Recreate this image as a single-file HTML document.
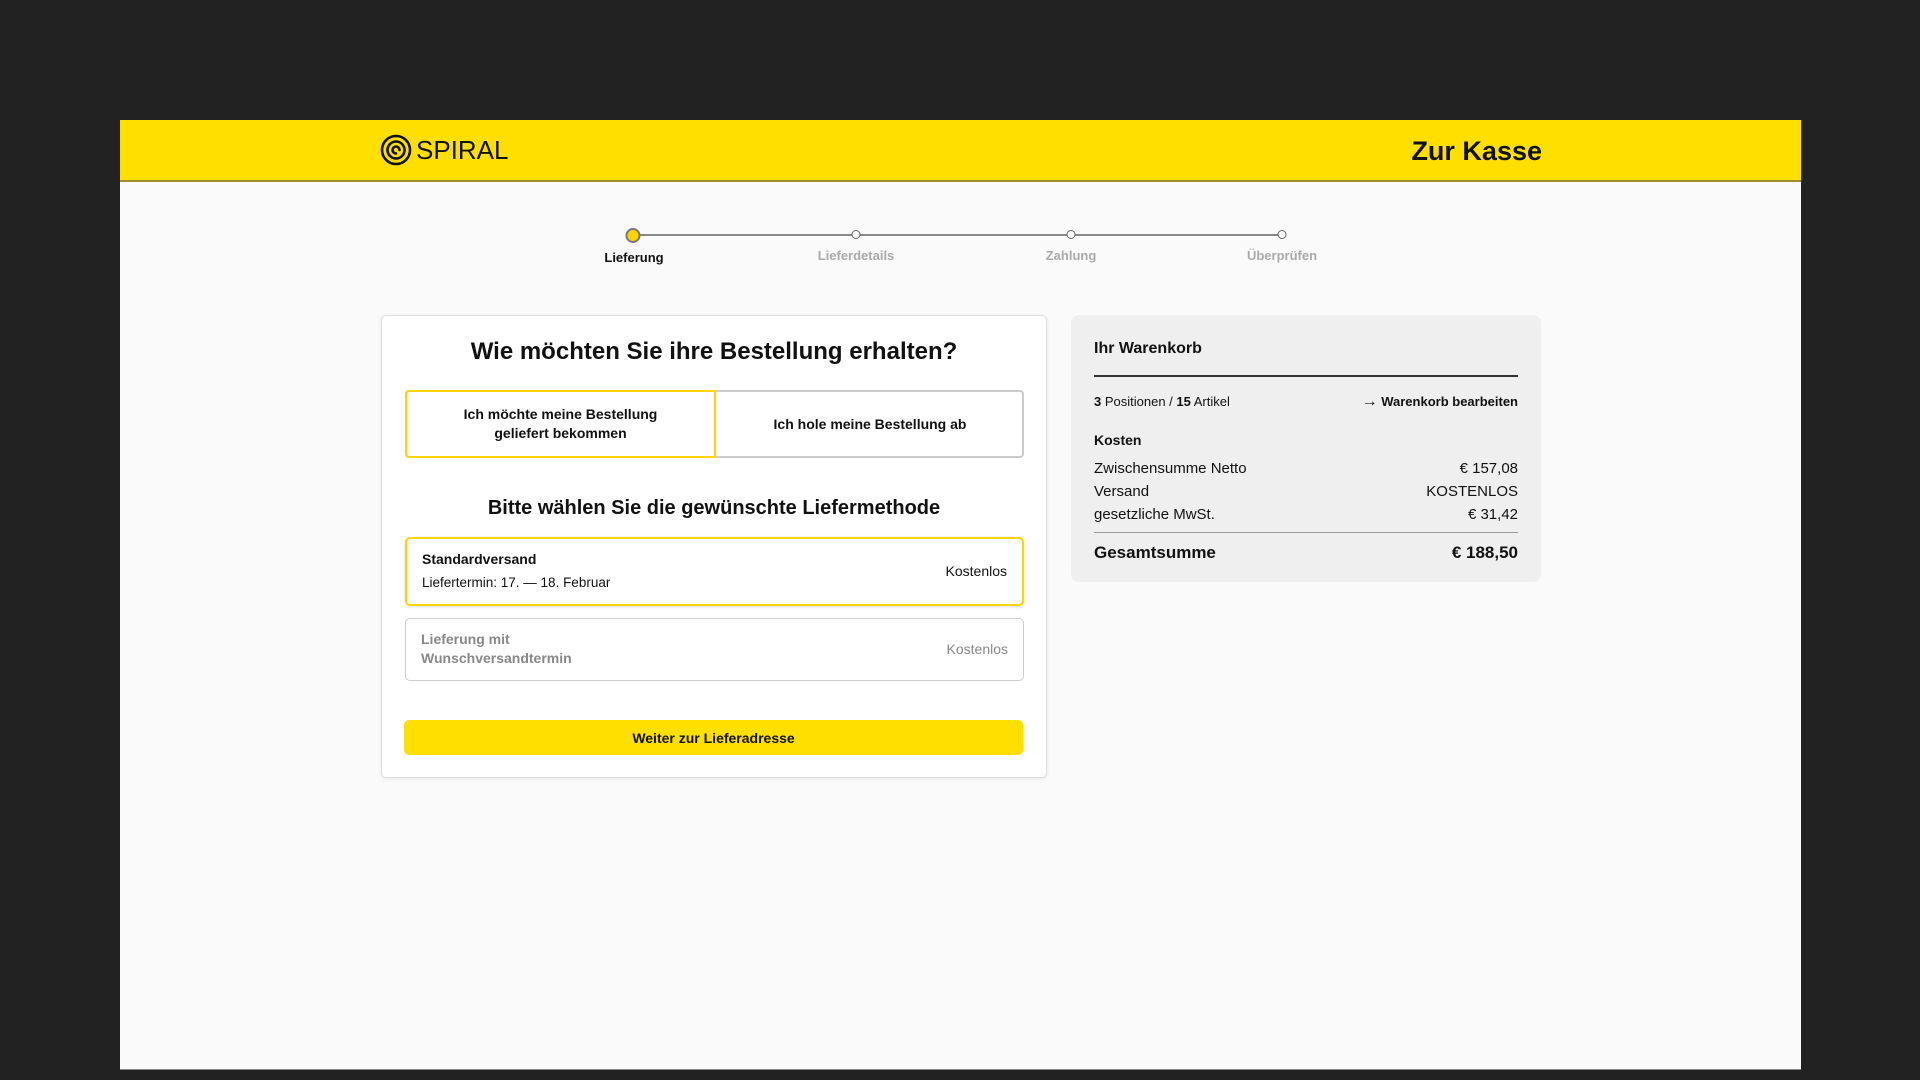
<!DOCTYPE html>
<html><head><meta charset="utf-8"><style>
*{box-sizing:border-box;margin:0;padding:0}
body{width:1920px;height:1080px;background:#222;font-family:"Liberation Sans",sans-serif;color:#111;position:relative;overflow:hidden}
.page{position:absolute;left:120px;top:120px;width:1681px;height:950px;background:#fafafa;border-bottom:1px solid #888}
.hdr{position:absolute;left:0;top:0;width:100%;height:62px;background:#ffdf00;border-bottom:2px solid #a08f2a}
.abs{position:absolute}
.step{position:absolute;top:130px;font-size:13px;font-weight:bold;color:#aaa;transform:translateX(-50%);white-space:nowrap}
.dot{position:absolute;top:110px;width:9px;height:9px;border:1.5px solid #666;border-radius:50%;background:#fff;transform:translateX(-50%)}
.card{position:absolute;left:261px;top:195px;width:666px;height:463px;background:#fff;border:1px solid #ddd;border-radius:5px;box-shadow:0 1px 4px rgba(0,0,0,.08)}
.row{display:flex;justify-content:space-between;font-size:15px}
</style></head><body>
<div class="page">
 <div class="hdr">
  <svg class="abs" style="left:260px;top:14px" width="32" height="32" viewBox="0 0 32 32" fill="none" stroke="#111" stroke-width="2.6" stroke-linecap="round"><path d="M16 30A14 14 0 1 1 30 16A14 14 0 0 1 16 30 M24.5 16A8.5 8.5 0 1 0 16 24.5 M16 24.5A8.5 8.5 0 0 0 24.5 16 M19.5 16A3.5 3.5 0 1 0 16 19.5"/></svg>
  <div class="abs" style="left:296px;top:15px;font-size:26px;letter-spacing:0px">SPIRAL</div>
  <div class="abs" style="right:259px;top:16px;font-size:27px;font-weight:bold">Zur Kasse</div>
 </div>
 <div class="abs" style="left:513px;top:114px;width:649px;height:2px;background:#888"></div>
 <div class="dot" style="left:513px;top:108px;width:15px;height:15px;background:#ffd400;border:2px solid #777"></div>
 <div class="dot" style="left:736px"></div>
 <div class="dot" style="left:951px"></div>
 <div class="dot" style="left:1162px"></div>
 <div class="step" style="left:514px;color:#111">Lieferung</div>
 <div class="step" style="left:736px;top:128px">Lieferdetails</div>
 <div class="step" style="left:951px;top:128px">Zahlung</div>
 <div class="step" style="left:1162px;top:128px">Überprüfen</div>

 <div class="card">
  <div class="abs" style="left:0;width:100%;top:22px;text-align:center;font-size:24px;font-weight:bold">Wie möchten Sie ihre Bestellung erhalten?</div>
  <div class="abs" style="left:23px;top:74px;width:619px;height:68px;border:2px solid #ccc;border-radius:4px"></div>
  <div class="abs" style="left:23px;top:74px;width:311px;height:68px;border:2px solid #ffd400;border-radius:4px 0 0 4px;display:flex;align-items:center;justify-content:center;text-align:center;font-size:14px;font-weight:bold;line-height:19px">Ich möchte meine Bestellung<br>geliefert bekommen</div>
  <div class="abs" style="left:334px;top:74px;width:308px;height:68px;display:flex;align-items:center;justify-content:center;font-size:14px;font-weight:bold">Ich hole meine Bestellung ab</div>
  <div class="abs" style="left:0;width:100%;top:181px;text-align:center;font-size:20px;font-weight:bold">Bitte wählen Sie die gewünschte Liefermethode</div>
  <div class="abs" style="left:23px;top:221px;width:619px;height:69px;border:2px solid #ffd400;border-radius:5px;box-shadow:0 1px 4px rgba(0,0,0,.12)">
   <div class="abs" style="left:15px;top:12px;font-size:14px;font-weight:bold">Standardversand</div>
   <div class="abs" style="left:15px;top:36px;font-size:13.5px">Liefertermin: 17. — 18. Februar</div>
   <div class="abs" style="right:15px;top:24px;font-size:14px">Kostenlos</div>
  </div>
  <div class="abs" style="left:23px;top:302px;width:619px;height:63px;border:1.5px solid #ccc;border-radius:5px;color:#888">
   <div class="abs" style="left:15px;top:11px;font-size:14px;font-weight:bold;line-height:19px">Lieferung mit<br>Wunschversandtermin</div>
   <div class="abs" style="right:15px;top:22px;font-size:14px">Kostenlos</div>
  </div>
 </div>
 <div class="abs" style="left:284px;top:600px;width:619px;height:35px;background:#ffdf00;border-radius:5px;display:flex;align-items:center;justify-content:center;font-size:14px;font-weight:bold">Weiter zur Lieferadresse</div>

 <div class="abs" style="left:951px;top:195px;width:470px;height:267px;background:#efefef;border-radius:8px">
  <div class="abs" style="left:23px;top:25px;font-size:16px;font-weight:bold">Ihr Warenkorb</div>
  <div class="abs" style="left:23px;right:23px;top:60px;height:2px;background:#333"></div>
  <div class="abs row" style="left:23px;right:23px;top:79px;font-size:13px"><span><b>3</b> Positionen / <b>15</b> Artikel</span><span><b><span style="font-size:16px;line-height:13px">→</span> Warenkorb bearbeiten</b></span></div>
  <div class="abs" style="left:23px;top:117px;font-size:14px;font-weight:bold">Kosten</div>
  <div class="abs row" style="left:23px;right:23px;top:145px"><span>Zwischensumme Netto</span><span>€ 157,08</span></div>
  <div class="abs row" style="left:23px;right:23px;top:168px"><span>Versand</span><span>KOSTENLOS</span></div>
  <div class="abs row" style="left:23px;right:23px;top:191px"><span>gesetzliche MwSt.</span><span>€ 31,42</span></div>
  <div class="abs" style="left:23px;right:23px;top:217px;height:1px;background:#999"></div>
  <div class="abs row" style="left:23px;right:23px;top:228px;font-size:17px;font-weight:bold"><span>Gesamtsumme</span><span>€ 188,50</span></div>
 </div>
</div>
</body></html>
